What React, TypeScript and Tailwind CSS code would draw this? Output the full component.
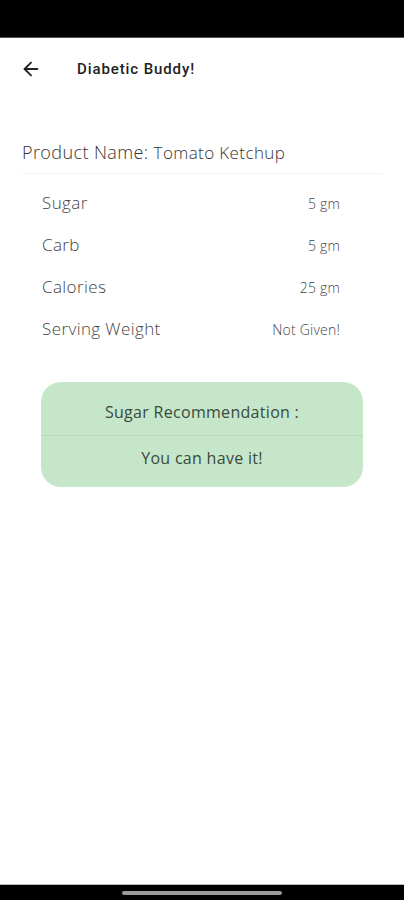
import { ArrowLeft } from 'lucide-react';

const rows = [
  { label: 'Sugar', value: '5 gm' },
  { label: 'Carb', value: '5 gm' },
  { label: 'Calories', value: '25 gm' },
  { label: 'Serving Weight', value: 'Not Given!' },
];

export default function App() {
  return (
    <div className="flex h-[900px] w-[404px] flex-col bg-white font-['Open_Sans',sans-serif] text-[#333]">
      {/* status bar */}
      <div className="h-[38px] shrink-0 border-b border-[#555] bg-black" />

      {/* app bar */}
      <header className="flex h-[62px] shrink-0 items-center px-5">
        <ArrowLeft className="size-[22px] text-[#222]" strokeWidth={2} />
        <h1 className="ml-[35px] font-['Roboto',sans-serif] text-[15px] font-medium tracking-[0.9px] text-[#222]">
          Diabetic Buddy!
        </h1>
      </header>

      <main className="flex flex-1 flex-col px-[22px] pt-[39px]">
        <div className="border-b border-[#f1f1f1] pb-[7px] text-[18px] font-light tracking-[0.4px] text-[#333]">
          Product Name: <span className="text-[17px]">Tomato Ketchup</span>
        </div>

        <ul className="flex flex-col pl-5 pr-[42px] pt-[8px] font-light">
          {rows.map((row) => (
            <li key={row.label} className="flex h-[42px] items-center justify-between">
              <span className="text-[17px] tracking-[0.4px] text-[#444]">{row.label}</span>
              <span className="text-[14px] tracking-[0.2px] text-[#444]">{row.value}</span>
            </li>
          ))}
        </ul>

        <div className="mx-[19px] mt-[32px] flex flex-col rounded-[20px] bg-[#c6e6c9] text-[16px] tracking-[0.3px] text-[#3a4a3c]">
          <div className="flex h-[54px] items-center justify-center border-b border-[#b8d8bb] pt-[6px]">
            Sugar Recommendation :
          </div>
          <div className="flex h-[51px] items-center justify-center pb-[8px]">
            You can have it!
          </div>
        </div>
      </main>

      {/* nav bar */}
      <div className="flex h-[16px] shrink-0 items-start justify-center border-t border-[#bbb] bg-black pt-[6px]">
        <div className="h-[4px] w-[160px] rounded-full bg-[#999]" />
      </div>
    </div>
  );
}
